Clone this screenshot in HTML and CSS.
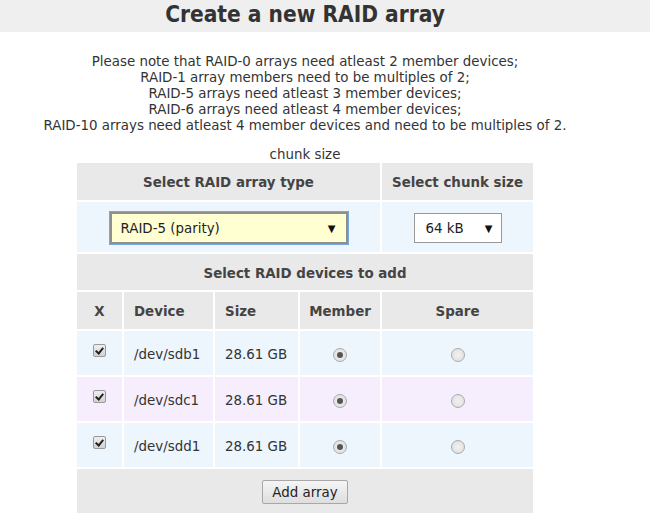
FILE: index.html
```html
<!DOCTYPE html>
<html>
<head>
<meta charset="utf-8">
<link rel="stylesheet" href="styles.css">
</head>
<body>
<header class="topbar"><h1 class="title">Create a new RAID array</h1></header>
<div class="note">Please note that RAID-0 arrays need atleast 2 member devices;<br>RAID-1 array members need to be multiples of 2;<br>RAID-5 arrays need atleast 3 member devices;<br>RAID-6 arrays need atleast 4 member devices;<br>RAID-10 arrays need atleast 4 member devices and need to be multiples of 2.</div>
<table class="raid">
<caption class="cap">chunk size</caption>
<colgroup><col class="c-x"><col class="c-dev"><col class="c-size"><col class="c-mem"><col class="c-spare"></colgroup>
<tr class="hdr h37"><th colspan="4">Select RAID array type</th><th>Select chunk size</th></tr>
<tr class="blue selrow">
<td colspan="4"><div class="sel sel-type"><span>RAID-5 (parity)</span><span class="arrow">▼</span></div></td>
<td><div class="sel sel-chunk"><span>64 kB</span><span class="arrow">▼</span></div></td>
</tr>
<tr class="hdr h36"><th colspan="5">Select RAID devices to add</th></tr>
<tr class="hdr h37"><th class="ctr">X</th><th class="lft">Device</th><th class="lft">Size</th><th class="ctr">Member</th><th class="ctr">Spare</th></tr>
<tr class="blue drow"><td class="ctr"><span class="cb"></span></td><td class="lft">/dev/sdb1</td><td class="lft">28.61 GB</td><td class="ctr"><span class="rb on"></span></td><td class="ctr"><span class="rb"></span></td></tr>
<tr class="pink drow"><td class="ctr"><span class="cb"></span></td><td class="lft">/dev/sdc1</td><td class="lft">28.61 GB</td><td class="ctr"><span class="rb on"></span></td><td class="ctr"><span class="rb"></span></td></tr>
<tr class="blue drow"><td class="ctr"><span class="cb"></span></td><td class="lft">/dev/sdd1</td><td class="lft">28.61 GB</td><td class="ctr"><span class="rb on"></span></td><td class="ctr"><span class="rb"></span></td></tr>
<tr class="hdr drow"><td colspan="5" class="ctr"><button class="btn">Add array</button></td></tr>
</table>
</body>
</html>
```
FILE: styles.css
```css
html, body { margin: 0; padding: 0; background: #fff; }
body { font-family: "DejaVu Sans", Verdana, sans-serif; font-size: 13.4px; color: #333; }
.topbar { background: #efefef; height: 32px; display: flex; align-items: center; justify-content: center; padding-right: 40px; }
.title { margin: 0; font-family: "DejaVu Sans Condensed", "DejaVu Sans", sans-serif; font-size: 22.5px; font-weight: bold; color: #333; line-height: 32px; position: relative; top: -2px; }
.note { margin: 22px 0 0 0; width: 610px; text-align: center; white-space: nowrap; line-height: 16px; }
.raid { margin: 15px 0 0 75px; width: 460px; border-spacing: 2px; border-collapse: separate; table-layout: fixed; }
.cap { line-height: 12px; padding-bottom: 0; color: #333; }
.c-x { width: 45px; } .c-dev { width: 89px; } .c-size { width: 83px; } .c-mem { width: 80px; } .c-spare { width: 151px; }
.raid th, .raid td { padding: 2px 0 0 0; vertical-align: middle; }
.raid th { font-weight: bold; color: #444; }
.hdr > th, .hdr > td { background: #e9e9e9; }
.h37 { height: 37px; } .h36 { height: 36px; }
.blue > td { background: #edf5fd; }
.pink > td { background: #f6eefc; }
.selrow { height: 50px; }
.drow { height: 44px; }
.raid .lft { text-align: left; padding-left: 10px; }
.ctr { text-align: center; }
.sel { box-sizing: border-box; display: flex; align-items: center; justify-content: space-between; margin: 0 auto; font-size: 13.4px; color: #222; }
.sel-type { width: 238px; height: 32px; background: #ffffd2; border: 2px solid #8f8f8f; box-shadow: 0 0 0 1px #7aa6e6; padding: 0 10px 0 9px; }
.sel-chunk { width: 88px; height: 30px; background: #fff; border: 1px solid #999; padding: 0 8px 0 11px; }
.arrow { font-size: 10px; color: #111; }
.cb { display: inline-block; width: 11px; height: 11px; border: 1px solid #999; border-radius: 2px; background: linear-gradient(#eee, #d2d2d2); position: relative; vertical-align: middle; top: -4px; }
.cb::after { content: ""; position: absolute; left: 3px; top: 1px; width: 3px; height: 6px; border: solid #222; border-width: 0 2px 2px 0; transform: rotate(40deg); }
.rb { display: inline-block; box-sizing: border-box; width: 14px; height: 14px; border-radius: 50%; border: 1px solid #aaa; background: radial-gradient(circle, #f2f2f2, #dcdcdc); position: relative; vertical-align: middle; }
.rb.on::after { content: ""; position: absolute; left: 3px; top: 3px; width: 6px; height: 6px; border-radius: 50%; background: #555; }
.btn { font-family: inherit; font-size: 13.4px; color: #222; height: 24px; width: 86px; padding: 0; border: 1px solid #a8a8a8; border-radius: 2px; background: linear-gradient(#f5f5f5, #dedede); }
```
